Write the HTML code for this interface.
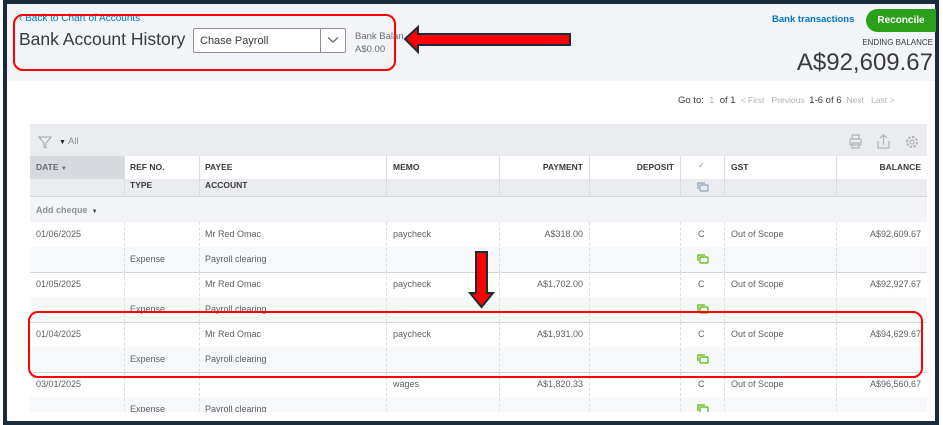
<!DOCTYPE html>
<html><head><meta charset="utf-8"><style>
*{margin:0;padding:0;box-sizing:border-box}
body{width:943px;height:425px;background:#fff;position:relative;overflow:hidden;font-family:"Liberation Sans",sans-serif;color:#393a3d}
.a{position:absolute;white-space:nowrap}
.frame{position:absolute;left:3px;top:0;width:936px;height:425px;border:4px solid #1c2b39;border-bottom-width:4px}
.hd{position:absolute;left:7px;top:4px;width:928px;height:77px;background:#f3f4f7}
.t{font-size:9px;color:#5d6066}
.h{font-size:8.5px;font-weight:bold;color:#393a3d}
.vl{position:absolute;width:0;border-left:1px dashed #dcdde0}
</style></head><body>
<div class="frame"></div>
<div class="hd"></div>
<div class="a" style="left:19px;top:13px;font-size:10px;color:#0077c5">‹ Back to Chart of Accounts</div>
<div class="a" style="left:19px;top:29px;font-size:17.5px;color:#393a3d">Bank Account History</div>
<div class="a" style="left:193px;top:28px;width:153px;height:25px;background:#fff;border:1px solid #8d9096;border-radius:2px"></div>
<div class="a" style="left:320px;top:28px;width:1px;height:25px;background:#8d9096"></div>
<div class="a" style="left:200px;top:35px;font-size:11px;color:#393a3d">Chase Payroll</div>
<svg class="a" style="left:327px;top:36px" width="12" height="8"><path d="M1 1.5 L6 6 L11 1.5" fill="none" stroke="#6b6c72" stroke-width="1.3"/></svg>
<div class="a" style="left:355px;top:31px;font-size:9.5px;color:#6b6c72">Bank Balan</div>
<div class="a" style="left:355px;top:44px;font-size:9.5px;color:#6b6c72">A$0.00</div>
<div class="a" style="left:772px;top:14px;font-size:9.5px;font-weight:bold;color:#0077c5">Bank transactions</div>
<div class="a" style="left:866px;top:9px;width:70px;height:23px;background:#2ca01c;border-radius:12px 0 0 12px;color:#fff;font-size:10px;font-weight:bold;text-align:center;line-height:23px">Reconcile</div>
<div class="a" style="left:800px;top:38px;width:133px;text-align:right;font-size:8px;color:#393a3d">ENDING BALANCE</div>
<div class="a" style="left:700px;top:49px;width:233px;text-align:right;font-size:24px;color:#393a3d">A$92,609.67</div>
<div class="a" style="left:678px;top:95px;font-size:9.5px;color:#393a3d">Go to: <span style="color:#b0b2b6">&nbsp;1&nbsp;</span> of 1 <span style="color:#b0b2b6;font-size:8.5px">&nbsp;&lt; First &nbsp; Previous &nbsp;</span>1-6 of 6 <span style="color:#b0b2b6;font-size:8.5px">&nbsp;Next &nbsp; Last &gt;</span></div>

<!-- table -->
<div class="a" style="left:30px;top:124px;width:897px;height:32px;background:#ebecef"></div>
<svg class="a" style="left:38px;top:136px" width="14" height="13"><path d="M1 1 H13 L8 7 V12 L6 11 V7 Z" fill="none" stroke="#a0a3a8" stroke-width="1"/></svg>
<div class="a" style="left:59px;top:136px;font-size:9.5px;color:#8d9096"><span style="font-size:7px;color:#222">▼</span> All</div>
<svg class="a" style="left:848px;top:134px" width="76" height="16" fill="none" stroke="#b0b2b6" stroke-width="1.2"><rect x="2" y="5" width="11" height="6" rx="1"/><rect x="4" y="1" width="7" height="4"/><rect x="4" y="9" width="7" height="5"/><path d="M30 7 V14 H41 V7 M35.5 11 V1 M32 4 L35.5 1 L39 4"/><circle cx="64" cy="8" r="2"/><circle cx="64" cy="8" r="5" stroke-dasharray="2.5 1.4" stroke-width="2"/></svg>
<div class="a" style="left:30px;top:156px;width:897px;height:23px;background:#fff"></div>
<div class="a" style="left:30px;top:156px;width:94px;height:23px;background:#d6d9de"></div>
<div class="a" style="left:30px;top:179px;width:897px;height:18px;background:#ebecef;border-bottom:1px solid #d4d6da"></div>
<div class="a" style="left:30px;top:197px;width:897px;height:25px;background:#f3f4f7"></div>
<div class="a" style="left:124px;top:156px;width:1px;height:41px;background:#dcdde0"></div>
<div class="a" style="left:199px;top:156px;width:1px;height:41px;background:#dcdde0"></div>
<div class="a" style="left:386px;top:156px;width:1px;height:41px;background:#dcdde0"></div>
<div class="a" style="left:499px;top:156px;width:1px;height:41px;background:#dcdde0"></div>
<div class="a" style="left:589px;top:156px;width:1px;height:41px;background:#dcdde0"></div>
<div class="a" style="left:680px;top:156px;width:1px;height:41px;background:#dcdde0"></div>
<div class="a" style="left:724px;top:156px;width:1px;height:41px;background:#dcdde0"></div>
<div class="a" style="left:836px;top:156px;width:1px;height:41px;background:#dcdde0"></div>
<div class="a h" style="left:36px;top:162px;color:#6b6c72">DATE <span style="font-size:6px">▼</span></div>
<div class="a h" style="left:130px;top:162px">REF NO.</div>
<div class="a h" style="left:205px;top:162px">PAYEE</div>
<div class="a h" style="left:393px;top:162px">MEMO</div>
<div class="a h" style="left:499px;top:162px;width:84px;text-align:right">PAYMENT</div>
<div class="a h" style="left:589px;top:162px;width:85px;text-align:right">DEPOSIT</div>
<div class="a" style="left:698px;top:161px;font-size:8px;color:#8d9096">✓</div>
<div class="a h" style="left:731px;top:162px">GST</div>
<div class="a h" style="left:836px;top:162px;width:85px;text-align:right">BALANCE</div>
<div class="a h" style="left:130px;top:180px">TYPE</div>
<div class="a h" style="left:205px;top:180px">ACCOUNT</div>
<svg class="a" style="left:696px;top:181px" width="14" height="12" fill="none" stroke="#8ba0b6" stroke-width="1.2"><path d="M2 8 V2 H9"/><rect x="4" y="4" width="8" height="6" rx="1"/></svg>
<div class="a" style="left:36px;top:205px;font-size:9px;font-weight:bold;color:#8d9096">Add cheque <span style="font-size:6px;color:#393a3d">&nbsp;▼</span></div>

<div id="rows"></div>
<script>
var rows=[["01/06/2025","Mr Red Omac","paycheck","A$318.00","A$92,609.67"],["01/05/2025","Mr Red Omac","paycheck","A$1,702.00","A$92,927.67"],["01/04/2025","Mr Red Omac","paycheck","A$1,931.00","A$94,629.67"],["03/01/2025","","wages","A$1,820.33","A$96,560.67"]];
var h="";
rows.forEach(function(r,i){var y=222+i*50;
h+='<div class="a" style="left:30px;top:'+y+'px;width:897px;height:25px;background:#fff;border-top:'+(i?'1px solid #d4d6da':'0')+'"></div>';
h+='<div class="a" style="left:30px;top:'+(y+25)+'px;width:897px;height:25px;background:#f7f8fa"></div>';
[124,199,386,499,589,680,724,836].forEach(function(x){h+='<div class="vl" style="left:'+x+'px;top:'+y+'px;height:50px"></div>';});
var ty=y+7;
h+='<div class="a t" style="left:36px;top:'+ty+'px">'+r[0]+'</div>';
h+='<div class="a t" style="left:205px;top:'+ty+'px">'+r[1]+'</div>';
h+='<div class="a t" style="left:393px;top:'+ty+'px">'+r[2]+'</div>';
h+='<div class="a t" style="left:499px;top:'+ty+'px;width:84px;text-align:right">'+r[3]+'</div>';
h+='<div class="a t" style="left:698px;top:'+ty+'px">C</div>';
h+='<div class="a t" style="left:731px;top:'+ty+'px">Out of Scope</div>';
h+='<div class="a t" style="left:836px;top:'+ty+'px;width:85px;text-align:right">'+r[4]+'</div>';
h+='<div class="a t" style="left:130px;top:'+(ty+25)+'px">Expense</div>';
h+='<div class="a t" style="left:205px;top:'+(ty+25)+'px">Payroll clearing</div>';
h+='<svg class="a" style="left:696px;top:'+(y+31)+'px" width="14" height="12" fill="none" stroke="#53b700" stroke-width="1.2"><path d="M2 8 V2 H9"/><rect x="4" y="4" width="8" height="6" rx="1"/></svg>';
});
document.getElementById("rows").innerHTML=h;
</script>
<div class="a" style="left:7px;top:412px;width:928px;height:9px;background:#fff"></div>
<div class="a" style="left:3px;top:421px;width:936px;height:4px;background:#1c2b39"></div>

<!-- annotations -->
<div class="a" style="left:13px;top:14px;width:383px;height:57px;border:2px solid #f00;border-radius:10px"></div>
<div class="a" style="left:28px;top:311px;width:895px;height:67px;border:2px solid #f00;border-radius:10px"></div>
<svg class="a" style="left:400px;top:24px" width="175" height="32"><path d="M5 15 L18 3 V10 H170 V21 H18 V28 Z" fill="#f00" stroke="#1c2b39" stroke-width="2"/></svg>
<svg class="a" style="left:468px;top:250px" width="28" height="60"><path d="M8 2 H19 V43 H25 L13.5 57 L2 43 H8 Z" fill="#f00" stroke="#1c2b39" stroke-width="2"/></svg>
</body></html>
